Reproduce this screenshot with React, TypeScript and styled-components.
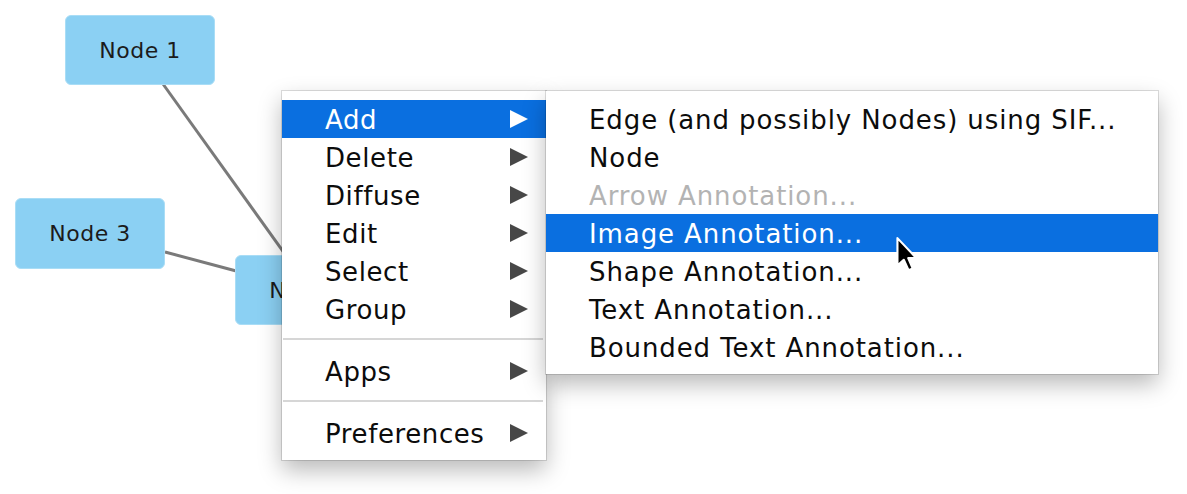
import React from "react";
import styled, { createGlobalStyle } from "styled-components";

const Global = createGlobalStyle`
  html, body { margin: 0; padding: 0; background: #ffffff; }
  body { font-family: "DejaVu Sans", "Liberation Sans", sans-serif; }
`;

const Canvas = styled.div`
  position: relative;
  width: 1187px;
  height: 494px;
  overflow: hidden;
  background: #ffffff;
`;

const EdgeLayer = styled.svg`
  position: absolute;
  left: 0;
  top: 0;
`;

const NodeBox = styled.div<{ $x: number; $y: number; $w: number; $h: number }>`
  position: absolute;
  left: ${(p) => p.$x}px;
  top: ${(p) => p.$y}px;
  width: ${(p) => p.$w}px;
  height: ${(p) => p.$h}px;
  box-sizing: border-box;
  background: #8bd0f3;
  border: 1px solid #a9ddf6;
  border-radius: 6px;
  display: flex;
  align-items: center;
  justify-content: center;
  font-family: "DejaVu Sans", sans-serif;
  font-size: 22px;
  letter-spacing: 0.5px;
  color: #1b1b1b;
`;

const MenuStack = styled.div`
  position: absolute;
  left: 282px;
  top: 91px;
  display: flex;
  align-items: flex-start;
`;

const Menu = styled.div<{ $w: number; $spacing: number }>`
  width: ${(p) => p.$w}px;
  box-sizing: border-box;
  background: #ffffff;
  padding: 9px 0 8px;
  display: flex;
  flex-direction: column;
  letter-spacing: ${(p) => p.$spacing}px;
  box-shadow: 0 0 0 1px rgba(0, 0, 0, 0.13), 0 10px 22px rgba(0, 0, 0, 0.28);
  position: relative;
`;

const Item = styled.div<{ $active?: boolean; $disabled?: boolean }>`
  height: 38px;
  display: flex;
  align-items: center;
  justify-content: space-between;
  padding: 0 18px 0 43px;
  background: ${(p) => (p.$active ? "#0a6fe0" : "transparent")};
  color: ${(p) => (p.$active ? "#ffffff" : p.$disabled ? "#b3b3b3" : "#0c0c0c")};
  font-family: "DejaVu Sans", sans-serif;
  font-size: 26px;
  white-space: nowrap;
`;

const Label = styled.span`
  display: block;
  line-height: 38px;
  padding-top: 2px;
`;

const Arrow = styled.span<{ $active?: boolean }>`
  width: 0;
  height: 0;
  border-top: 9px solid transparent;
  border-bottom: 9px solid transparent;
  border-left: 18px solid ${(p) => (p.$active ? "#ffffff" : "#474747")};
`;

const Separator = styled.div`
  height: 2px;
  background: #d6d6d6;
  margin: 10px 3px 12px 1px;
`;

const Cursor = styled.svg`
  position: absolute;
  left: 894px;
  top: 236px;
`;

type MainEntry = { label: string; active?: boolean } | "sep";

const mainItems: MainEntry[] = [
  { label: "Add", active: true },
  { label: "Delete" },
  { label: "Diffuse" },
  { label: "Edit" },
  { label: "Select" },
  { label: "Group" },
  "sep",
  { label: "Apps" },
  "sep",
  { label: "Preferences" },
];

const subItems: { label: string; active?: boolean; disabled?: boolean }[] = [
  { label: "Edge (and possibly Nodes) using SIF..." },
  { label: "Node" },
  { label: "Arrow Annotation...", disabled: true },
  { label: "Image Annotation...", active: true },
  { label: "Shape Annotation..." },
  { label: "Text Annotation..." },
  { label: "Bounded Text Annotation..." },
];

export default function App() {
  return (
    <>
      <Global />
      <Canvas>
        <EdgeLayer width={1187} height={494}>
          <line x1={163} y1={84} x2={300} y2={275} stroke="#7a7a7a" strokeWidth={3} />
          <line x1={165} y1={252} x2={240} y2={272} stroke="#7a7a7a" strokeWidth={3} />
        </EdgeLayer>
        <NodeBox $x={65} $y={15} $w={150} $h={70}>Node 1</NodeBox>
        <NodeBox $x={15} $y={198} $w={150} $h={71}>Node 3</NodeBox>
        <NodeBox $x={235} $y={255} $w={150} $h={70}>Node 2</NodeBox>
        <MenuStack>
          <Menu $w={264} $spacing={0.6}>
            {mainItems.map((it, i) =>
              it === "sep" ? (
                <Separator key={i} />
              ) : (
                <Item key={i} $active={it.active}>
                  <Label>{it.label}</Label>
                  <Arrow $active={it.active} />
                </Item>
              )
            )}
          </Menu>
          <Menu $w={612} $spacing={0.9}>
            {subItems.map((it, i) => (
              <Item key={i} $active={it.active} $disabled={it.disabled}>
                <Label>{it.label}</Label>
              </Item>
            ))}
          </Menu>
        </MenuStack>
        <Cursor width={28} height={38} viewBox="0 0 26 36">
          <path
            d="M3 2 L3 28 L9 22.5 L13.5 32.5 L17.5 30.8 L13.2 21 L21 21 Z"
            fill="#000000"
            stroke="#ffffff"
            strokeWidth={2}
            strokeLinejoin="round"
          />
        </Cursor>
      </Canvas>
    </>
  );
}
